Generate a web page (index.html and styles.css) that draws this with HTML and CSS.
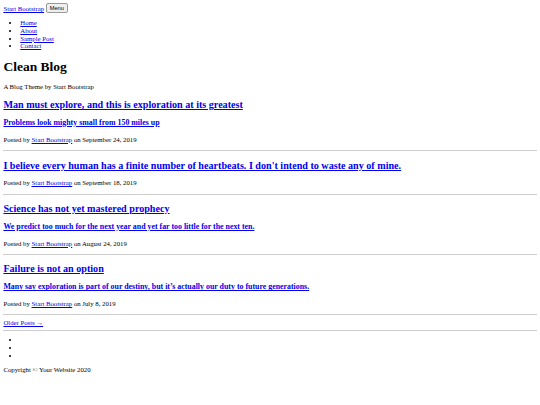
FILE: index.html
```html
<!DOCTYPE html>
<html lang="en">
<head>
  <meta charset="UTF-8" />
  <title>Clean Blog - Start Bootstrap Theme</title>
  <link rel="stylesheet" href="styles.css">
</head>
<body>
  <nav class="navbar" id="mainNav">
    <div class="container">
      <a class="navbar-brand" href="#">Start Bootstrap</a>
      <button class="navbar-toggler" type="button">Menu</button>
      <div class="navbar-collapse">
        <ul class="navbar-nav">
          <li><a href="#">Home</a></li>
          <li><a href="#">About</a></li>
          <li><a href="#">Sample Post</a></li>
          <li><a href="#">Contact</a></li>
        </ul>
      </div>
    </div>
  </nav>

  <header class="masthead">
    <div class="site-heading">
      <h1>Clean Blog</h1>
      <span class="subheading">A Blog Theme by Start Bootstrap</span>
    </div>
  </header>

  <div class="container">
    <div class="post-preview">
      <a href="#">
        <h2 class="post-title">Man must explore, and this is exploration at its greatest</h2>
        <h3 class="post-subtitle">Problems look mighty small from 150 miles up</h3>
      </a>
      <p class="post-meta">Posted by <a href="#">Start Bootstrap</a> on September 24, 2019</p>
    </div>
    <hr>
    <div class="post-preview">
      <a href="#">
        <h2 class="post-title">I believe every human has a finite number of heartbeats. I don't intend to waste any of mine.</h2>
      </a>
      <p class="post-meta">Posted by <a href="#">Start Bootstrap</a> on September 18, 2019</p>
    </div>
    <hr>
    <div class="post-preview">
      <a href="#">
        <h2 class="post-title">Science has not yet mastered prophecy</h2>
        <h3 class="post-subtitle">We predict too much for the next year and yet far too little for the next ten.</h3>
      </a>
      <p class="post-meta">Posted by <a href="#">Start Bootstrap</a> on August 24, 2019</p>
    </div>
    <hr>
    <div class="post-preview">
      <a href="#">
        <h2 class="post-title">Failure is not an option</h2>
        <h3 class="post-subtitle">Many say exploration is part of our destiny, but it’s actually our duty to future generations.</h3>
      </a>
      <p class="post-meta">Posted by <a href="#">Start Bootstrap</a> on July 8, 2019</p>
    </div>
    <hr>
    <div class="clearfix">
      <a class="btn" href="#">Older Posts &rarr;</a>
    </div>
  </div>

  <hr>

  <footer>
    <ul class="list-inline">
      <li><a href="#"><span class="fa-stack"></span></a></li>
      <li><a href="#"><span class="fa-stack"></span></a></li>
      <li><a href="#"><span class="fa-stack"></span></a></li>
    </ul>
    <p class="copyright">Copyright &copy; Your Website 2020</p>
  </footer>
</body>
</html>
```

FILE: styles.css
```css
/* unstyled page, shrunk from 1280px wide to 540 */
html {
  font-size: 6.75px;
}
body {
  margin: 3.4px;
  font-family: 'Liberation Serif', 'Times New Roman', serif;
  line-height: 1.13;
  color: #000;
}
a {
  color: #0000ee;
}
ul {
  padding-left: 2.5em;
}
.navbar-toggler {
  font-family: 'Liberation Sans', Arial, sans-serif;
  font-size: 5.6px;
  line-height: 1.1;
  padding: 0.5px 3px;
  border: 1px solid #999;
  border-radius: 2px;
  background: #efefef;
  color: #000;
  vertical-align: 1px;
}
.post-title,
.post-subtitle {
  font-weight: bold;
}
hr {
  border: none;
  border-top: 1px solid #ccc;
  margin: 0.5em 0;
}
.list-inline {
  margin-top: 0.8em;
}
.copyright {
  margin-top: 0.6em;
}
```
